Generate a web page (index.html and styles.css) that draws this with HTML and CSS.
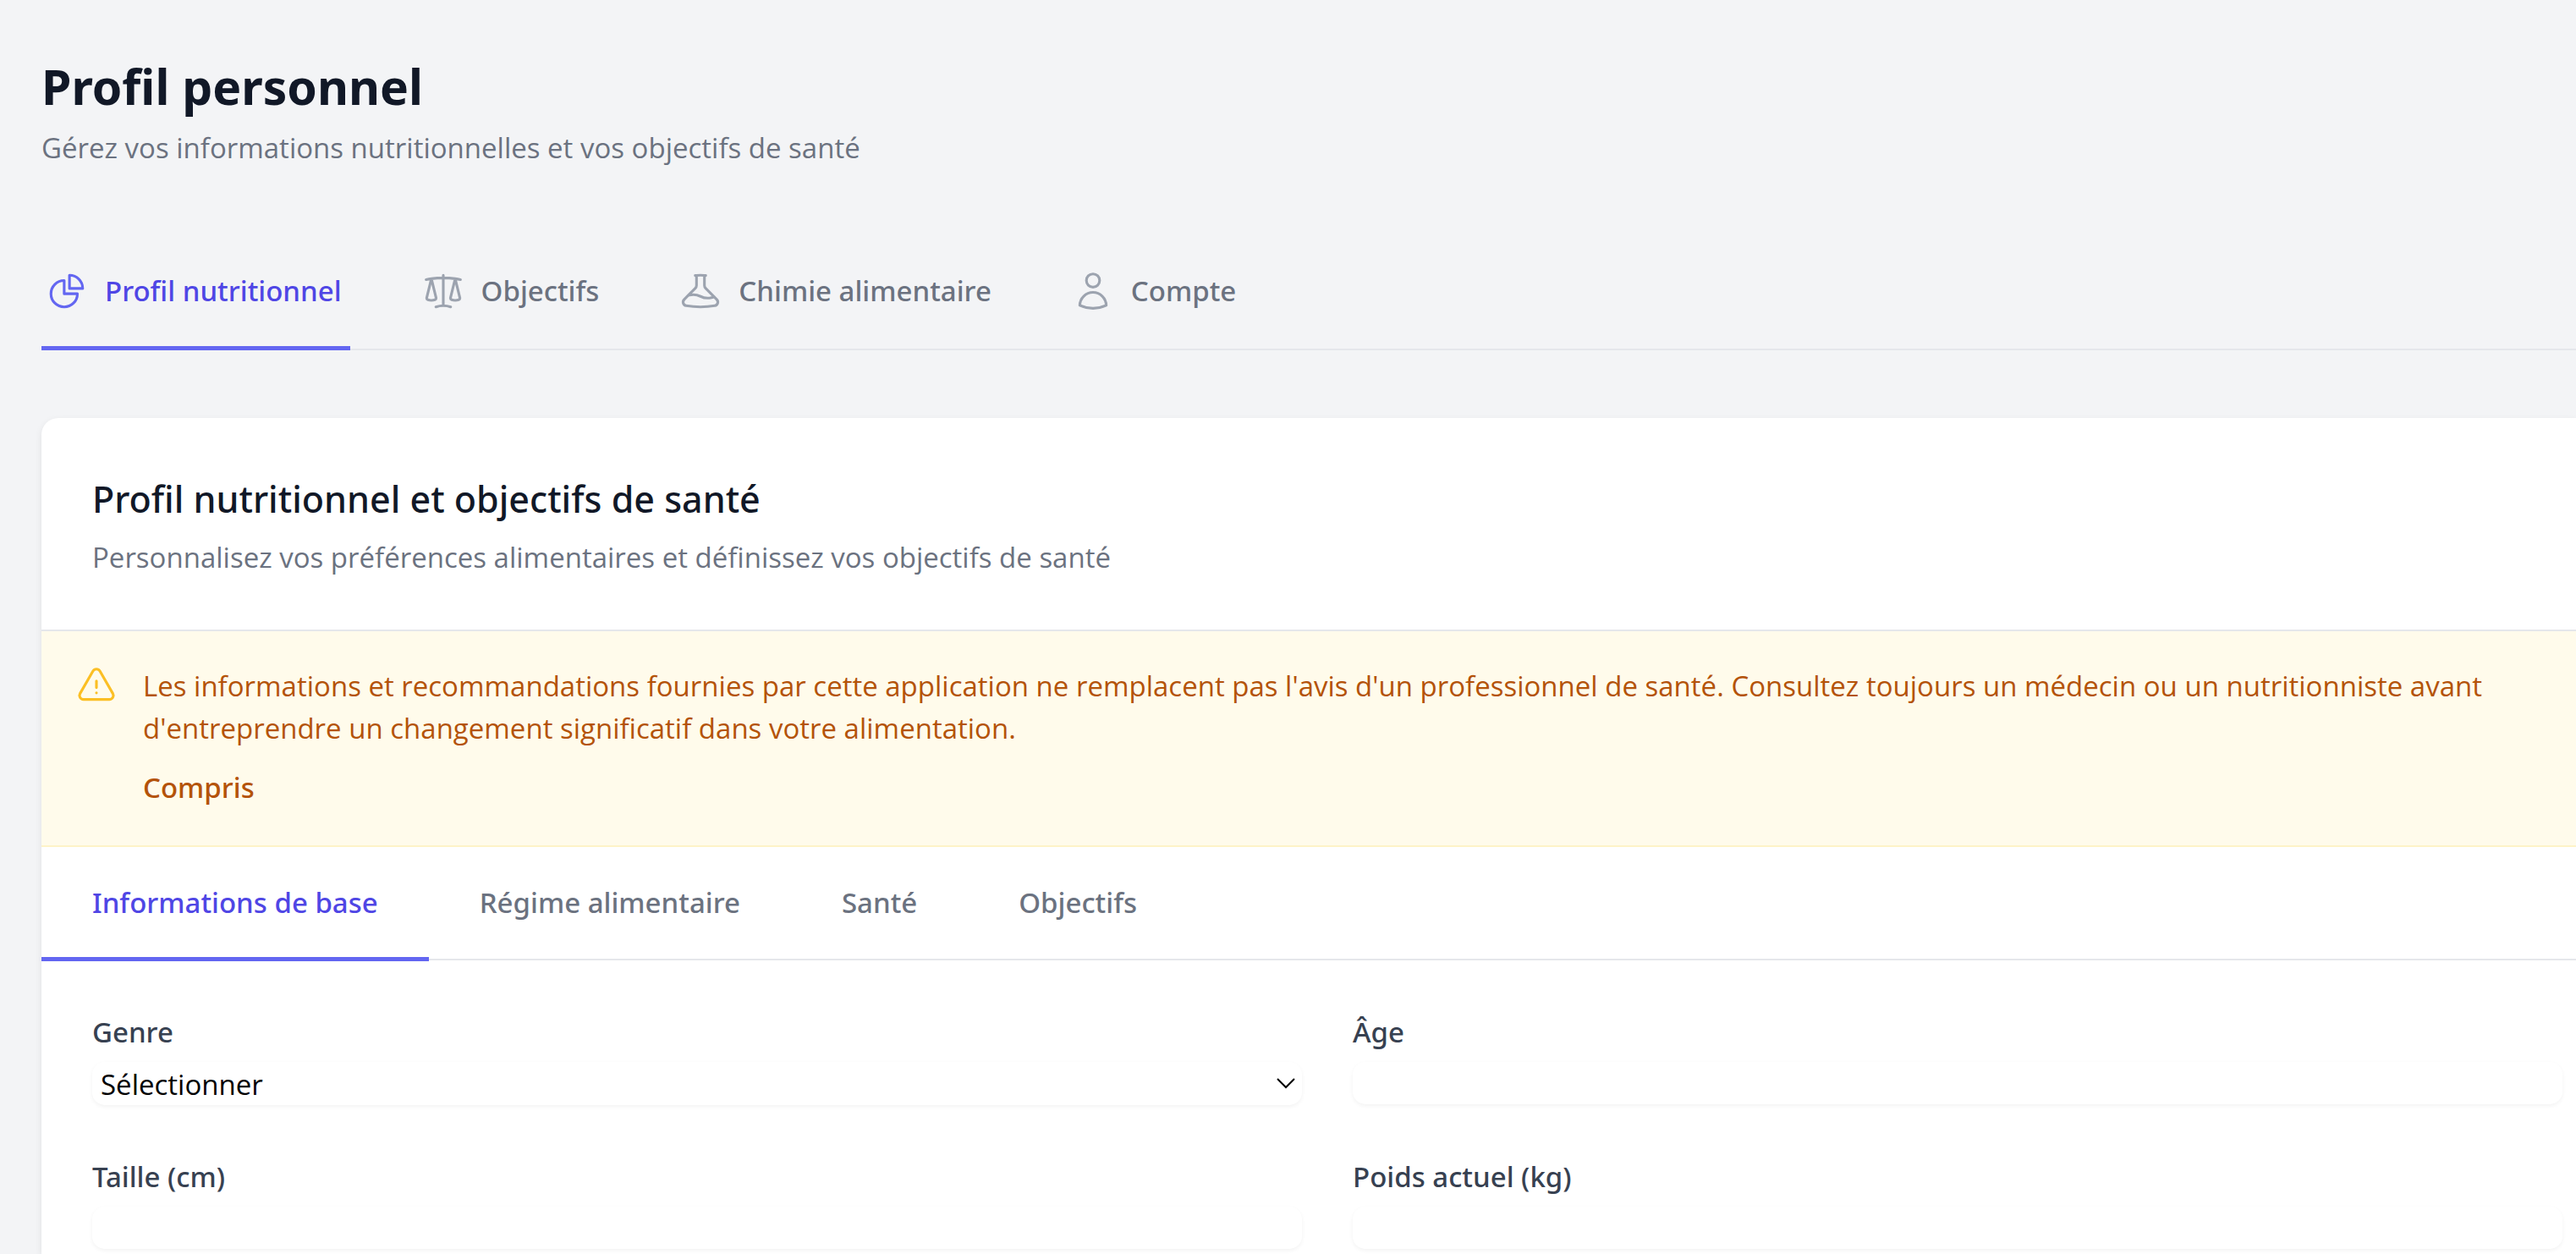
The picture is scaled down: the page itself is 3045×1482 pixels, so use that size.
FILE: index.html
```
<!DOCTYPE html>
<html lang="fr">
<head>
  <meta charset="utf-8">
  <meta name="viewport" content="width=device-width, initial-scale=1">
  <title>Profil personnel</title>
  <link rel="stylesheet" href="styles.css">
</head>
<body>
  <main class="page">
    <header class="page-header">
      <h1 class="page-title">Profil personnel</h1>
      <p class="lead">Gérez vos informations nutritionnelles et vos objectifs de santé</p>
    </header>

    <nav class="tabs" aria-label="Sections du profil">
      <button type="button" class="tab tab-active" aria-current="page">
        <svg class="icon" viewBox="0 0 24 24" aria-hidden="true"><path d="M10.5 6a7.5 7.5 0 107.5 7.5h-7.5V6z"/><path d="M13.5 10.5H21A7.5 7.5 0 0013.5 3v7.5z"/></svg>
        <span>Profil nutritionnel</span>
      </button>
      <button type="button" class="tab">
        <svg class="icon" viewBox="0 0 24 24" aria-hidden="true"><path d="M12 3v17.25m0 0c-1.472 0-2.882.265-4.185.75M12 20.25c1.472 0 2.882.265 4.185.75M18.75 4.97A48.416 48.416 0 0012 4.5c-2.291 0-4.545.16-6.75.47m13.5 0c1.01.143 2.01.317 3 .52m-3-.52l2.62 10.726c.122.499-.106 1.028-.589 1.202a5.988 5.988 0 01-2.031.352 5.988 5.988 0 01-2.031-.352c-.483-.174-.711-.703-.59-1.202L18.75 4.971zm-16.5.52c.99-.203 1.99-.377 3-.52m0 0l2.62 10.726c.122.499-.106 1.028-.589 1.202a5.989 5.989 0 01-2.031.352 5.989 5.989 0 01-2.031-.352c-.483-.174-.711-.703-.59-1.202L5.25 4.971z"/></svg>
        <span>Objectifs</span>
      </button>
      <button type="button" class="tab">
        <svg class="icon" viewBox="0 0 24 24" aria-hidden="true"><path d="M9.75 3.104v5.714a2.25 2.25 0 01-.659 1.591L5 14.5M9.75 3.104c-.251.023-.501.05-.75.082m.75-.082a24.301 24.301 0 014.5 0m0 0v5.714c0 .597.237 1.17.659 1.591L19.8 15.3M14.25 3.104c.251.023.501.05.75.082M19.8 15.3l-1.57.393A9.065 9.065 0 0112 15a9.065 9.065 0 00-6.23-.693L5 14.5m14.8.8l1.402 1.402c1.232 1.232.65 3.318-1.067 3.611A48.309 48.309 0 0112 21c-2.773 0-5.491-.235-8.135-.687-1.718-.293-2.3-2.379-1.067-3.61L5 14.5"/></svg>
        <span>Chimie alimentaire</span>
      </button>
      <button type="button" class="tab">
        <svg class="icon" viewBox="0 0 24 24" aria-hidden="true"><path d="M15.75 6a3.75 3.75 0 11-7.5 0 3.75 3.75 0 017.5 0zM4.501 20.118a7.5 7.5 0 0114.998 0A17.933 17.933 0 0112 21.75c-2.676 0-5.216-.584-7.499-1.632z"/></svg>
        <span>Compte</span>
      </button>
    </nav>

    <section class="card">
      <header class="card-header">
        <h2 class="card-title">Profil nutritionnel et objectifs de santé</h2>
        <p class="lead">Personnalisez vos préférences alimentaires et définissez vos objectifs de santé</p>
      </header>

      <div class="notice" role="note">
        <svg class="icon" viewBox="0 0 24 24" aria-hidden="true"><path d="M12 9v3.75m-9.303 3.376c-.866 1.5.217 3.374 1.948 3.374h14.71c1.73 0 2.813-1.874 1.948-3.374L13.949 3.378c-.866-1.5-3.032-1.5-3.898 0L2.697 16.126zM12 15.75h.007v.008H12v-.008z"/></svg>
        <div class="notice-body">
          <p class="notice-text">Les informations et recommandations fournies par cette application ne remplacent pas l'avis d'un professionnel de santé. Consultez toujours un médecin ou un nutritionniste avant d'entreprendre un changement significatif dans votre alimentation.</p>
          <button type="button" class="notice-button">Compris</button>
        </div>
      </div>

      <nav class="subtabs" aria-label="Rubriques nutritionnelles">
        <button type="button" class="subtab subtab-active" aria-current="page">Informations de base</button>
        <button type="button" class="subtab">Régime alimentaire</button>
        <button type="button" class="subtab">Santé</button>
        <button type="button" class="subtab">Objectifs</button>
      </nav>

      <form class="form">
        <div class="field">
          <label class="label" for="genre">Genre</label>
          <div class="select">
            <select class="control select-control" id="genre">
              <option>Sélectionner</option>
              <option>Femme</option>
              <option>Homme</option>
            </select>
            <svg class="chevron" viewBox="0 0 22 13" aria-hidden="true"><path d="M1 1l10 10L21 1"/></svg>
          </div>
        </div>
        <div class="field">
          <label class="label" for="age">Âge</label>
          <input class="control" id="age" type="text" inputmode="numeric">
        </div>
        <div class="field">
          <label class="label" for="taille">Taille (cm)</label>
          <input class="control" id="taille" type="text" inputmode="numeric">
        </div>
        <div class="field">
          <label class="label" for="poids">Poids actuel (kg)</label>
          <input class="control" id="poids" type="text" inputmode="decimal">
        </div>
      </form>
    </section>
  </main>
</body>
</html>
```
FILE: styles.css
```
*,
*::before,
*::after {
  box-sizing: border-box;
}

body {
  margin: 0;
  background: #f3f4f6;
  color: #111827;
  font: 400 33px/50px "Open Sans", "Noto Sans", sans-serif;
}

h1,
h2,
p {
  margin: 0;
}

button,
input,
select {
  margin: 0;
  border: 0;
  padding: 0;
  background: transparent;
  color: inherit;
  font: inherit;
}

button {
  cursor: pointer;
}

.page-title,
.card-title,
.tab,
.subtab,
.notice-button,
.label {
  font-family: "Noto Sans", "Open Sans", sans-serif;
  font-weight: 500;
}

.page {
  display: flex;
  flex-direction: column;
  min-height: 100vh;
  padding: 62px 0 0 49px;
}

.page-header {
  display: flex;
  flex-direction: column;
  gap: 8px;
}

.page-title {
  font-size: 57px;
  font-weight: 700;
  line-height: 80px;
}

.lead {
  color: #6b7280;
}

.icon {
  flex: none;
  width: 50px;
  height: 50px;
  fill: none;
  stroke: currentColor;
  stroke-width: 1.5;
  stroke-linecap: round;
  stroke-linejoin: round;
}

/* Main sections */
.tabs {
  display: flex;
  gap: 80px;
  margin-top: 79px;
  border-bottom: 2px solid #e5e7eb;
}

.tab {
  display: flex;
  align-items: center;
  gap: 20px;
  margin-bottom: -2px;
  border-bottom: 5px solid transparent;
  padding: 40px 10px 40px 5px;
  color: #6b7280;
}

.tab .icon {
  color: #9ca3af;
}

.tab-active {
  border-color: #6366f1;
  color: #4f46e5;
}

.tab-active .icon {
  color: #6366f1;
}

/* Card */
.card {
  flex: 1;
  margin-top: 80px;
  border-top-left-radius: 20px;
  background: #fff;
  box-shadow: 0 3px 8px rgba(0, 0, 0, 0.08);
}

.card-header {
  display: flex;
  flex-direction: column;
  gap: 8px;
  border-bottom: 2px solid #e5e7eb;
  padding: 60px;
}

.card-title {
  font-size: 43px;
  line-height: 72px;
}

.notice {
  display: flex;
  gap: 30px;
  border-bottom: 2px solid #fef3c7;
  padding: 40px;
  background: #fffbeb;
  color: #b45309;
}

.notice .icon {
  color: #fbbf24;
}

.notice-body {
  display: flex;
  flex-direction: column;
  align-items: flex-start;
  gap: 20px;
  padding-bottom: 3px;
}

/* Card sections */
.subtabs {
  display: flex;
  border-bottom: 2px solid #e5e7eb;
}

.subtab {
  margin-bottom: -3px;
  border-bottom: 5px solid transparent;
  padding: 41px 60px 39px;
  color: #6b7280;
}

.subtab-active {
  border-color: #6366f1;
  color: #4f46e5;
}

/* Form */
.form {
  display: grid;
  grid-template-columns: 1fr 1fr;
  gap: 60px;
  padding: 60px 16px 0 60px;
}

.field {
  display: flex;
  flex-direction: column;
  gap: 10px;
}

.label {
  color: #374151;
}

.control {
  width: 100%;
  height: 50px;
  border-radius: 15px;
  padding: 0 10px;
  background: #fff;
  box-shadow: 0 2px 5px rgba(0, 0, 0, 0.05);
  color: #000;
}

.select {
  display: grid;
  align-items: center;
}

.select > * {
  grid-area: 1 / 1;
}

.select-control {
  height: 51px;
  padding-top: 2px;
  appearance: none;
}

.chevron {
  justify-self: end;
  width: 22px;
  height: 13px;
  margin-right: 8px;
  fill: none;
  stroke: #000;
  stroke-width: 2;
  pointer-events: none;
}
```
